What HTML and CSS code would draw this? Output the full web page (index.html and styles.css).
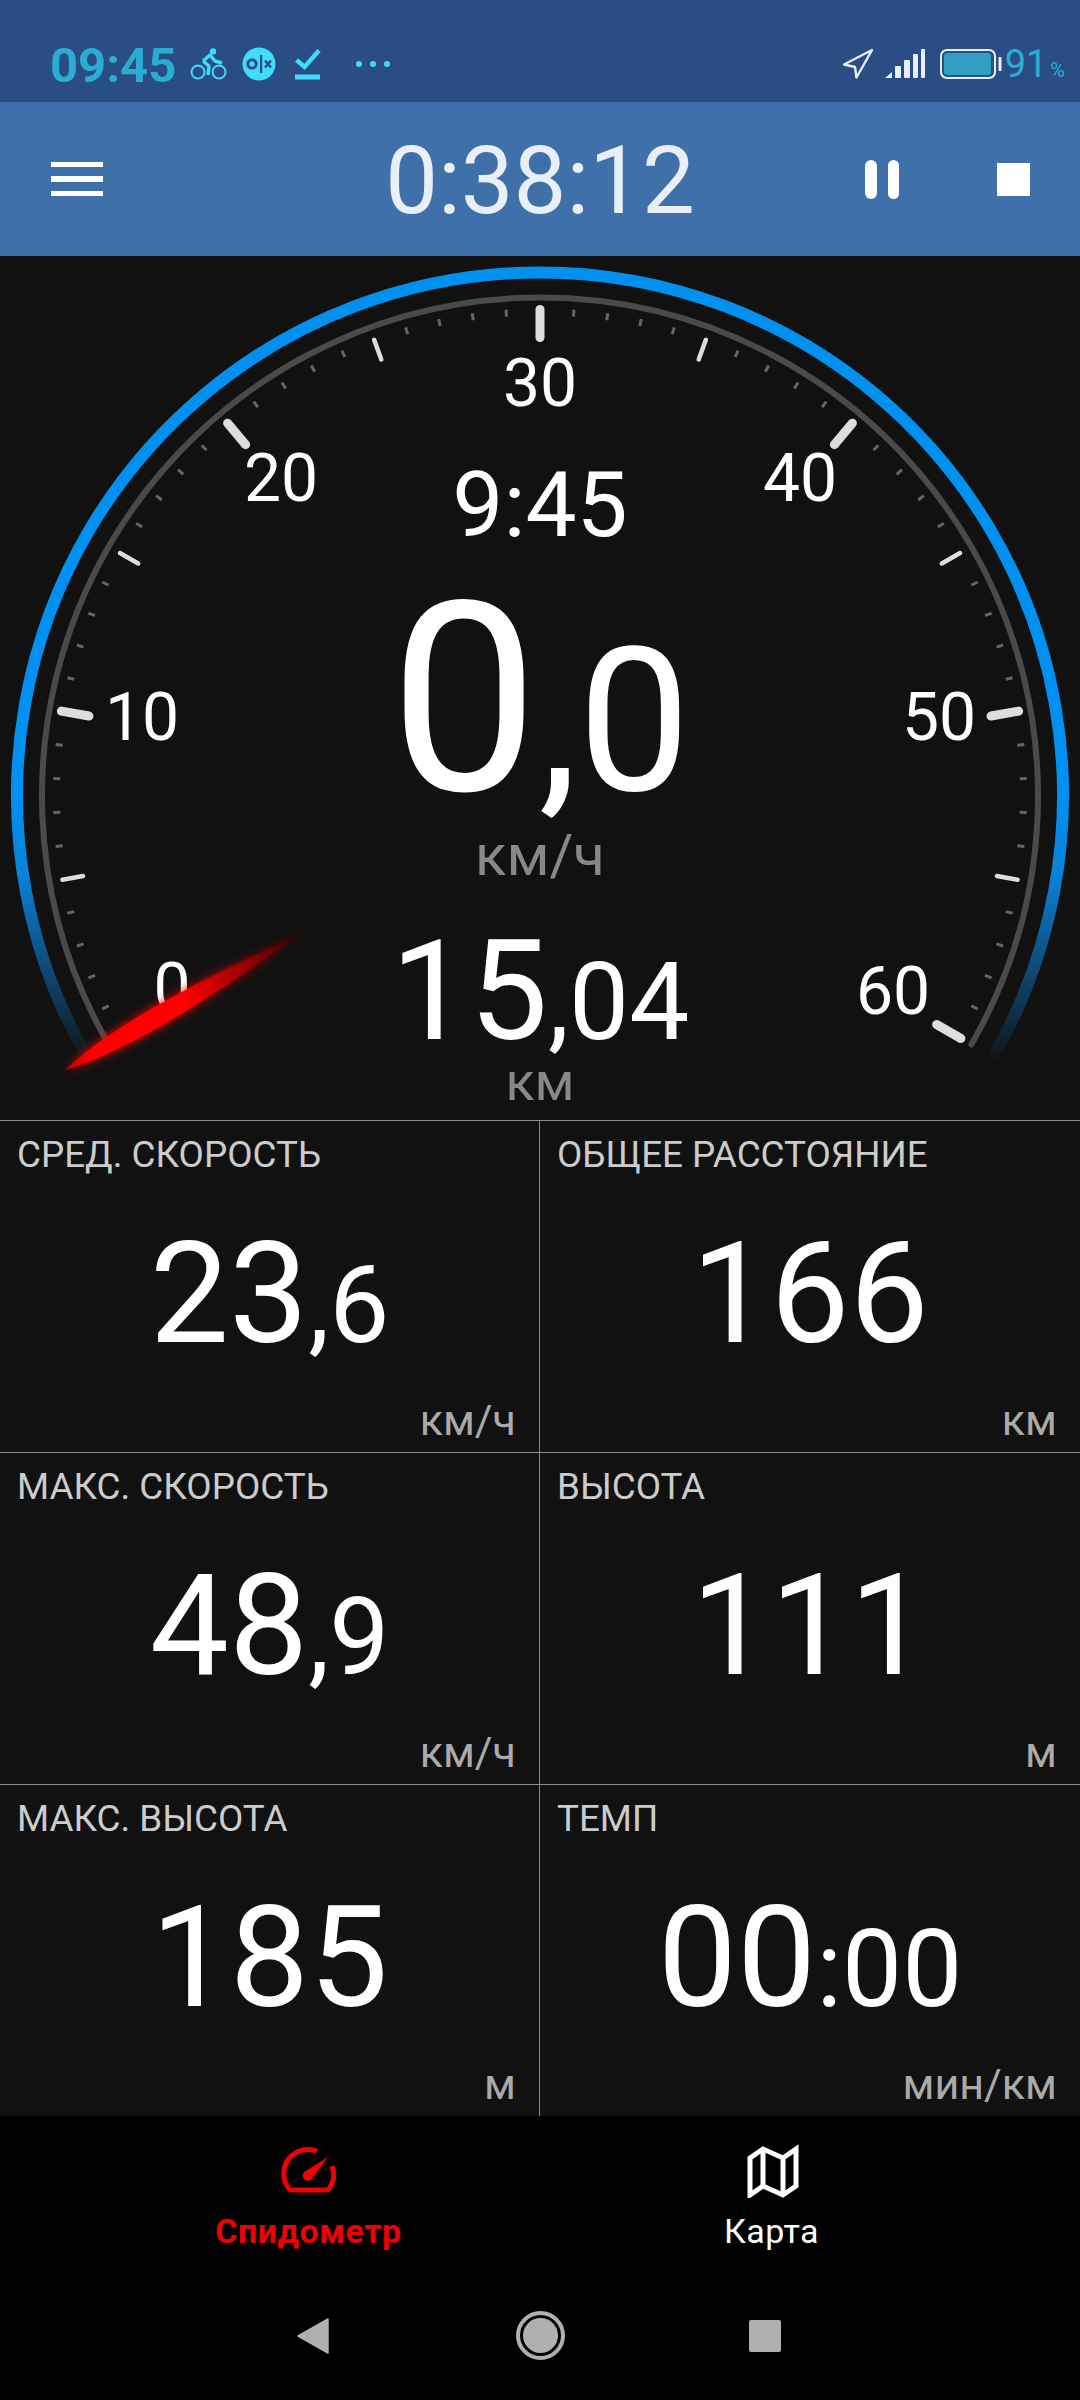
FILE: index.html
```html
<!DOCTYPE html>
<html lang="ru">
<head>
  <meta charset="UTF-8" />
  <meta name="viewport" content="width=device-width, initial-scale=1" />
  <title>Спидометр</title>
  <link rel="stylesheet" href="styles.css">
</head>
<body>
  <div class="statusbar">
    <span class="clock">09:45</span>
    <svg class="ico-bike" width="38" height="34" viewBox="0 0 38 34" fill="none" stroke="#3fdcfb" stroke-width="2">
      <circle cx="8" cy="25" r="6.5" />
      <circle cx="29" cy="25" r="6.5" />
      <circle cx="23" cy="4.5" r="3.2" fill="#3fdcfb" stroke="none" />
      <path d="M13 14 L20 8 L25 14 L32 16 M13 14 L19 19 L18 28" stroke-width="3.4" stroke-linejoin="round" />
    </svg>
    <svg class="ico-olx" width="34" height="34" viewBox="0 0 34 34">
      <circle cx="17" cy="17" r="16.5" fill="#3fdcfb" />
      <circle cx="10" cy="17" r="4.2" fill="none" stroke="#2a4d83" stroke-width="3" />
      <rect x="18" y="8" width="2.2" height="18" fill="#2a4d83" />
      <path d="M23 13.5 L29 20.5 M29 13.5 L23 20.5" stroke="#2a4d83" stroke-width="2.4" />
    </svg>
    <svg class="ico-check" width="26" height="31" viewBox="0 0 26 31" fill="none" stroke="#3fdcfb">
      <path d="M1.5 11 L9.5 18 L24 1.5" stroke-width="4.4" />
      <path d="M0 28 H25" stroke-width="5" />
    </svg>
    <span class="dots"><i></i><i></i><i></i></span>
    <span class="status-right">
      <svg width="32" height="32" viewBox="0 0 32 32" fill="none" stroke="#e8eef6" stroke-width="2.4" stroke-linejoin="round">
        <path d="M30 2 L2 16.5 L13 19 L14.5 29.5 Z" />
      </svg>
      <svg class="ico-signal" width="40" height="30" viewBox="0 0 40 30" fill="#e8eef6">
        <path d="M0 29 L7 23 V29 Z" />
        <rect x="10" y="17" width="6" height="12" rx="1" />
        <rect x="19" y="11" width="6" height="18" rx="1" />
        <rect x="28" y="5" width="5" height="24" rx="1" />
        <rect x="36" y="0" width="4" height="29" rx="1" />
      </svg>
      <svg class="ico-batt" width="62" height="30" viewBox="0 0 62 30">
        <rect x="1" y="1" width="54" height="28" rx="6" fill="none" stroke="#e8eef6" stroke-width="2" />
        <rect x="4" y="4" width="47" height="22" rx="3.5" fill="#2f9fc4" />
        <rect x="58.5" y="8" width="3" height="14" rx="1" fill="#e8eef6" />
      </svg>
      <span class="batt-level">91<small>%</small></span>
    </span>
  </div>

  <div class="appbar">
    <div class="bar-left">
      <div class="burger"><i></i><i></i><i></i></div>
    </div>
    <div class="timer">0:38:12</div>
    <div class="bar-right">
      <div class="pause"><i></i><i></i></div>
      <div class="stop"></div>
    </div>
  </div>

  <div class="gauge">
    <svg id="dial" width="1080" height="864" viewBox="0 0 1080 864">
      <defs>
        <linearGradient id="blueFade" gradientUnits="userSpaceOnUse" x1="0" y1="540" x2="0" y2="801">
          <stop offset="0" stop-color="#0090f0" />
          <stop offset="0.3" stop-color="#0a82d8" />
          <stop offset="1" stop-color="#0a82d8" stop-opacity="0.04" />
        </linearGradient>
        <linearGradient id="needleFill" x1="0" y1="0" x2="1" y2="0">
          <stop offset="0" stop-color="#c00000" />
          <stop offset="0.1" stop-color="#ff0000" />
          <stop offset="0.5" stop-color="#ff0000" />
          <stop offset="0.8" stop-color="#860000" />
          <stop offset="1" stop-color="#300000" />
        </linearGradient>
      </defs>

      <path class="arc-blue" d="M87.1 801 A523 523 0 1 1 992.9 801" />
      <path class="arc-gray" d="M108.7 788.5 A498 498 0 1 1 971.3 788.5" />
      <g id="ticks"></g>

      <text class="scale" x="172" y="754">0</text>
      <text class="scale" x="142" y="484">10</text>
      <text class="scale" x="281" y="245">20</text>
      <text class="scale" x="540" y="150">30</text>
      <text class="scale" x="800" y="245">40</text>
      <text class="scale" x="939" y="484">50</text>
      <text class="scale" x="893" y="758">60</text>

      <text class="clock-big" x="540" y="280">9:45</text>
      <text class="speed" x="540" y="534">0<tspan class="speed-frac">,0</tspan></text>
      <text class="unit" x="540" y="619">км/ч</text>
      <text class="dist" x="540" y="783">15<tspan class="dist-frac">,04</tspan></text>
      <text class="unit-short" x="540" y="844">км</text>

      <g transform="translate(65 814) rotate(-30)">
        <path class="needle-glow" d="M0 0 C60 -13 130 -13 274 0 C130 13 60 13 0 0 Z" fill="url(#needleFill)" />
        <path d="M0 0 C60 -13 130 -13 274 0 C130 13 60 13 0 0 Z" fill="url(#needleFill)" />
      </g>
    </svg>
  </div>

  <div class="stats">
    <div class="cell">
      <div class="cell-label">СРЕД. СКОРОСТЬ</div>
      <div class="cell-value">23<span>,6</span></div>
      <div class="cell-unit">км/ч</div>
    </div>
    <div class="cell">
      <div class="cell-label">ОБЩЕЕ РАССТОЯНИЕ</div>
      <div class="cell-value">166</div>
      <div class="cell-unit">км</div>
    </div>
    <div class="cell">
      <div class="cell-label">МАКС. СКОРОСТЬ</div>
      <div class="cell-value">48<span>,9</span></div>
      <div class="cell-unit">км/ч</div>
    </div>
    <div class="cell">
      <div class="cell-label">ВЫСОТА</div>
      <div class="cell-value">111</div>
      <div class="cell-unit">м</div>
    </div>
    <div class="cell">
      <div class="cell-label">МАКС. ВЫСОТА</div>
      <div class="cell-value">185</div>
      <div class="cell-unit">м</div>
    </div>
    <div class="cell">
      <div class="cell-label">ТЕМП</div>
      <div class="cell-value">00<span>:00</span></div>
      <div class="cell-unit">мин/км</div>
    </div>
  </div>

  <div class="tabs">
    <div class="tab active">
      <svg width="60" height="50" viewBox="0 0 60 50" fill="none" stroke="#f00000" stroke-width="5">
        <path d="M38 5.5 A24 24 0 0 0 9.5 42 Q10.5 44 13 44 H47 Q49.5 44 50.5 42 A24 24 0 0 0 53 20" />
        <path d="M49 11 L33 33 A5 5 0 0 1 25 26 Z" fill="#f00000" stroke="none" />
      </svg>
      <span>Спидометр</span>
    </div>
    <div class="tab">
      <svg width="54" height="54" viewBox="0 0 54 54" fill="none" stroke="#fff" stroke-width="5">
        <path d="M5 14 L18 5 L38 14 L51 5 V42 L38 51 L18 42 L5 51 Z" />
        <path d="M18 5 V42 M38 14 V51" />
      </svg>
      <span>Карта</span>
    </div>
  </div>

  <div class="sysnav">
    <svg width="32" height="36" viewBox="0 0 32 36">
      <path d="M31 1 V35 L1 18 Z" fill="#b0b0b0" stroke="#b0b0b0" stroke-width="1.5" stroke-linejoin="round" />
    </svg>
    <div class="home"><i></i></div>
    <div class="recent"></div>
  </div>

  <script>
    // scale marks: 0..60 over 240 degrees, one mark per unit
    const ticks = document.getElementById("ticks");
    for (let v = 0; v <= 60; v++) {
      const a = (-120 + v * 4) * Math.PI / 180;
      let cls = "tick-minor", r1 = 487, r2 = 480;
      if (v % 10 === 0) { cls = "tick-major"; r1 = 486; r2 = 458; }
      else if (v % 5 === 0) { cls = "tick-mid"; r1 = 485; r2 = 464; }
      const line = document.createElementNS("http://www.w3.org/2000/svg", "line");
      line.setAttribute("class", cls);
      line.setAttribute("x1", 540 + r1 * Math.sin(a));
      line.setAttribute("y1", 539.5 - r1 * Math.cos(a));
      line.setAttribute("x2", 540 + r2 * Math.sin(a));
      line.setAttribute("y2", 539.5 - r2 * Math.cos(a));
      ticks.appendChild(line);
    }
  </script>
</body>
</html>
```

FILE: styles.css
```css
* { box-sizing: border-box; }
body { margin: 0; width: 1080px; height: 2400px; background: #000; font-family: Roboto, "Noto Sans", sans-serif; overflow: hidden; }
i { display: block; }

/* status bar */
.statusbar { height: 102px; padding: 26px 15px 0 50px; background: #2a4d83; display: flex; align-items: center; }
.clock { font-size: 49px; line-height: 56px; font-weight: 700; color: #2badd3; margin-top: 4px; }
.ico-bike { margin-left: 14px; }
.ico-olx { margin-left: 14px; }
.ico-check { margin-left: 19px; }
.dots { display: flex; gap: 8px; margin-left: 35px; }
.dots i { width: 6px; height: 6px; border-radius: 50%; background: #3fdcfb; }
.status-right { margin-left: auto; display: flex; align-items: center; }
.ico-signal { margin-left: 11px; }
.ico-batt { margin-left: 15px; }
.batt-level { font-size: 38px; line-height: 44px; color: #2badd3; margin-top: 6px; margin-left: 3px; }
.batt-level small { font-size: 20px; margin-left: 3px; }

/* app bar */
.appbar { height: 154px; background: #3f70a9; display: flex; align-items: center; }
.bar-left { width: 256px; padding-left: 51px; }
.burger { width: 52px; display: flex; flex-direction: column; gap: 9px; }
.burger i { height: 5.5px; background: #fff; }
.timer { flex: 1; margin-top: 3px; text-align: center; font-size: 94px; line-height: 112px; color: #e8eff7; }
.bar-right { width: 256px; padding-left: 41px; display: flex; align-items: center; gap: 98px; }
.pause { display: flex; gap: 11px; }
.pause i { width: 11.5px; height: 39px; border-radius: 6px; background: #fff; }
.stop { width: 33px; height: 33px; background: #fff; }

/* gauge */
.gauge { height: 864px; background: #111; }
#dial { display: block; }
#dial text { font-family: Roboto, sans-serif; text-anchor: middle; fill: #fff; }
.arc-blue { fill: none; stroke: url(#blueFade); stroke-width: 12; }
.arc-gray { fill: none; stroke: #4a4a4a; stroke-width: 6; stroke-linecap: round; }
.tick-major { stroke: #ddd; stroke-width: 9; stroke-linecap: round; }
.tick-mid { stroke: #ddd; stroke-width: 4.5; stroke-linecap: round; }
.tick-minor { stroke: #666; stroke-width: 3; }
#dial .scale { font-size: 66px; }
#dial .clock-big { font-size: 91px; }
#dial .speed { font-size: 265px; }
#dial .speed-frac { font-size: 200px; }
#dial .dist { font-size: 140px; }
#dial .dist-frac { font-size: 107px; }
#dial .unit { font-size: 58px; fill: #888; }
#dial .unit-short { font-size: 54px; fill: #888; }
.needle-glow { filter: blur(5px); }

/* stat cells */
.stats { display: grid; grid-template-columns: 540px 540px; grid-auto-rows: 332px; background: #111; }
.cell { border-top: 1px solid #888; padding-top: 13px; }
.cell:nth-child(odd) { border-right: 1px solid #888; }
.cell-label { margin-left: 17px; font-size: 36.8px; line-height: 42px; color: #ccc; }
.cell-value { margin-top: 47px; height: 142px; font-size: 141px; line-height: 142px; color: #fff; text-align: center; white-space: nowrap; }
.cell-value span { font-size: 107px; line-height: 1; }
.cell-unit { margin: 32px 23px 0 0; font-size: 43px; line-height: 46px; color: #aaa; text-align: right; }

/* bottom tabs */
.tabs { height: 164px; padding: 28px 77px 0; background: #000; display: flex; }
.tab { width: 463px; display: flex; flex-direction: column; align-items: center; color: #fff; }
.tab svg { height: 54px; }
.tab span { font-size: 34px; letter-spacing: 0.5px; line-height: 38px; margin-top: 14px; }
.tab.active { color: #f00000; }
.tab.active span { font-weight: 700; }

/* system navigation */
.sysnav { height: 120px; padding: 0 3px 9px 0; background: #000; display: flex; align-items: center; justify-content: center; gap: 184px; }
.home { width: 49px; height: 49px; margin-left: 3px; border: 4px solid #b0b0b0; border-radius: 50%; padding: 3px; }
.home i { width: 100%; height: 100%; border-radius: 50%; background: #b0b0b0; }
.recent { width: 32px; height: 32px; border-radius: 2px; background: #b0b0b0; }
```
